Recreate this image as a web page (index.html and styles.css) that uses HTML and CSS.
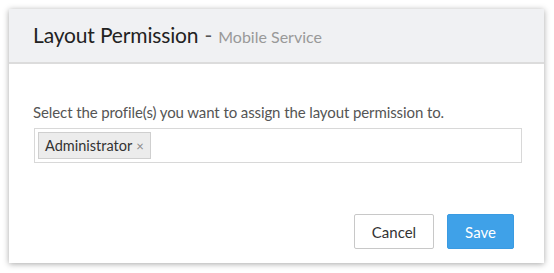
FILE: index.html
```html
<!DOCTYPE html>
<html lang="en">
<head>
    <meta charset="UTF-8">
    <title>Layout Permission</title>
    <link rel="stylesheet" href="styles.css">
</head>
<body>
    <div class="dialog">
        <div class="dialog-header">
            <span class="title">Layout Permission</span>
            <span class="dash">-</span>
            <span class="subtitle">Mobile Service</span>
        </div>
        <div class="dialog-body">
            <label class="field-label">Select the profile(s) you want to assign the layout permission to.</label>
            <div class="tag-input">
                <span class="tag">Administrator <span class="tag-close">&times;</span></span>
            </div>
        </div>
        <div class="dialog-footer">
            <button class="btn btn-cancel">Cancel</button>
            <button class="btn btn-save">Save</button>
        </div>
    </div>
</body>
</html>
```

FILE: styles.css
```css
body {
    margin: 0;
    padding: 9px 10px 10px 9px;
    background: #fff;
    font-family: Lato, "Open Sans", sans-serif;
}
.dialog {
    width: 535px;
    height: 254px;
    background: #fff;
    box-shadow: 0 1px 6px rgba(0, 0, 0, 0.35);
    display: flex;
    flex-direction: column;
}
.dialog-header {
    height: 51px;
    padding-bottom: 2px;
    background: #f0f1f3;
    border-bottom: 2px solid #dcdcdc;
    padding-left: 24px;
    display: flex;
    align-items: center;
    gap: 6px;
}
.title {
    font-size: 21px;
    color: #222;
    letter-spacing: -0.15px;
}
.dash {
    font-size: 21px;
    color: #555;
}
.subtitle {
    font-size: 16px;
    color: #999;
    padding-top: 3px;
}
.dialog-body {
    padding: 39px 0 0 24px;
}
.field-label {
    display: block;
    font-size: 15px;
    letter-spacing: -0.1px;
    color: #555;
    margin-bottom: 7px;
}
.tag-input {
    width: 483px;
    height: 33px;
    margin-left: 1px;
    border: 1px solid #d8d8d8;
    display: flex;
    align-items: center;
    padding-left: 3px;
}
.tag {
    height: 25px;
    padding: 0 6px 0 6px;
    background: #ececec;
    border: 1px solid #cfcfcf;
    font-size: 14.5px;
    color: #333;
    display: flex;
    align-items: center;
    gap: 4px;
}
.tag-close {
    font-size: 13px;
    color: #888;
}
.dialog-footer {
    margin-top: auto;
    padding: 0 30px 14px 0;
    display: flex;
    justify-content: flex-end;
    gap: 13px;
}
.btn {
    height: 35px;
    font-family: inherit;
    font-size: 15px;
    border-radius: 2px;
    cursor: pointer;
}
.btn-cancel {
    width: 80px;
    background: #fff;
    border: 1px solid #c8c8c8;
    color: #333;
}
.btn-save {
    width: 67px;
    background: #3fa1e8;
    border: 1px solid #3a9be2;
    color: #fff;
}
```
